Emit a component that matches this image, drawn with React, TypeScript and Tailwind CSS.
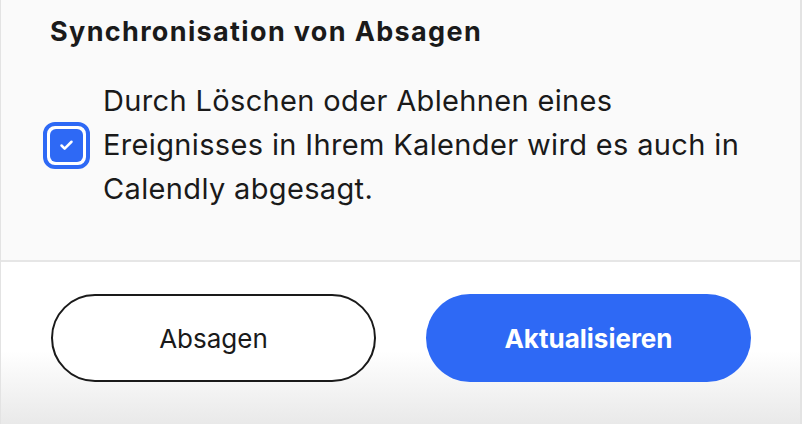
import { Check } from "lucide-react";

export default function App() {
  return (
    <div
      className="flex h-[424px] w-[802px] flex-col overflow-hidden border-l border-r-2 border-[#e3e3e3] bg-white text-[#1a1a1a]"
      style={{ fontFamily: "Inter, 'Liberation Sans', sans-serif" }}
    >
      {/* Sync section */}
      <div className="h-[262px] border-b-2 border-[#e6e6e6] bg-[#fafafa] pl-[49px] pr-10 pt-[14px]">
        <h2 className="text-[27px] font-bold leading-[36px] tracking-[1.35px]">Synchronisation von Absagen</h2>
        <div className="mt-[29px] flex items-center gap-[13px]">
          <div className="-ml-[7px] flex h-[47px] w-[47px] shrink-0 items-center justify-center rounded-[12px] border-[4px] border-[#2e69f5] bg-white">
            <div className="flex h-[33px] w-[33px] items-center justify-center rounded-[6px] bg-[#2e69f5]">
              <Check className="h-[15px] w-[15px] text-white" strokeWidth={4} />
            </div>
          </div>
          <p className="whitespace-nowrap text-[29px] font-normal leading-[44px] tracking-[0.35px]">
            Durch Löschen oder Ablehnen eines
            <br />
            Ereignisses in Ihrem Kalender wird es auch in
            <br />
            Calendly abgesagt.
          </p>
        </div>
      </div>

      {/* Actions */}
      <div className="flex flex-1 items-start gap-[50px] bg-gradient-to-b from-white from-[55%] to-[#e9e9e9] pl-[50px] pt-[32px]">
        <button className="flex h-[88px] w-[325px] items-center justify-center rounded-full border-2 border-[#1a1a1a] bg-white text-[26px] text-[#1a1a1a]">
          Absagen
        </button>
        <button className="flex h-[88px] w-[325px] items-center justify-center rounded-full bg-[#2e69f5] text-[26px] font-bold text-white">
          Aktualisieren
        </button>
      </div>
    </div>
  );
}
